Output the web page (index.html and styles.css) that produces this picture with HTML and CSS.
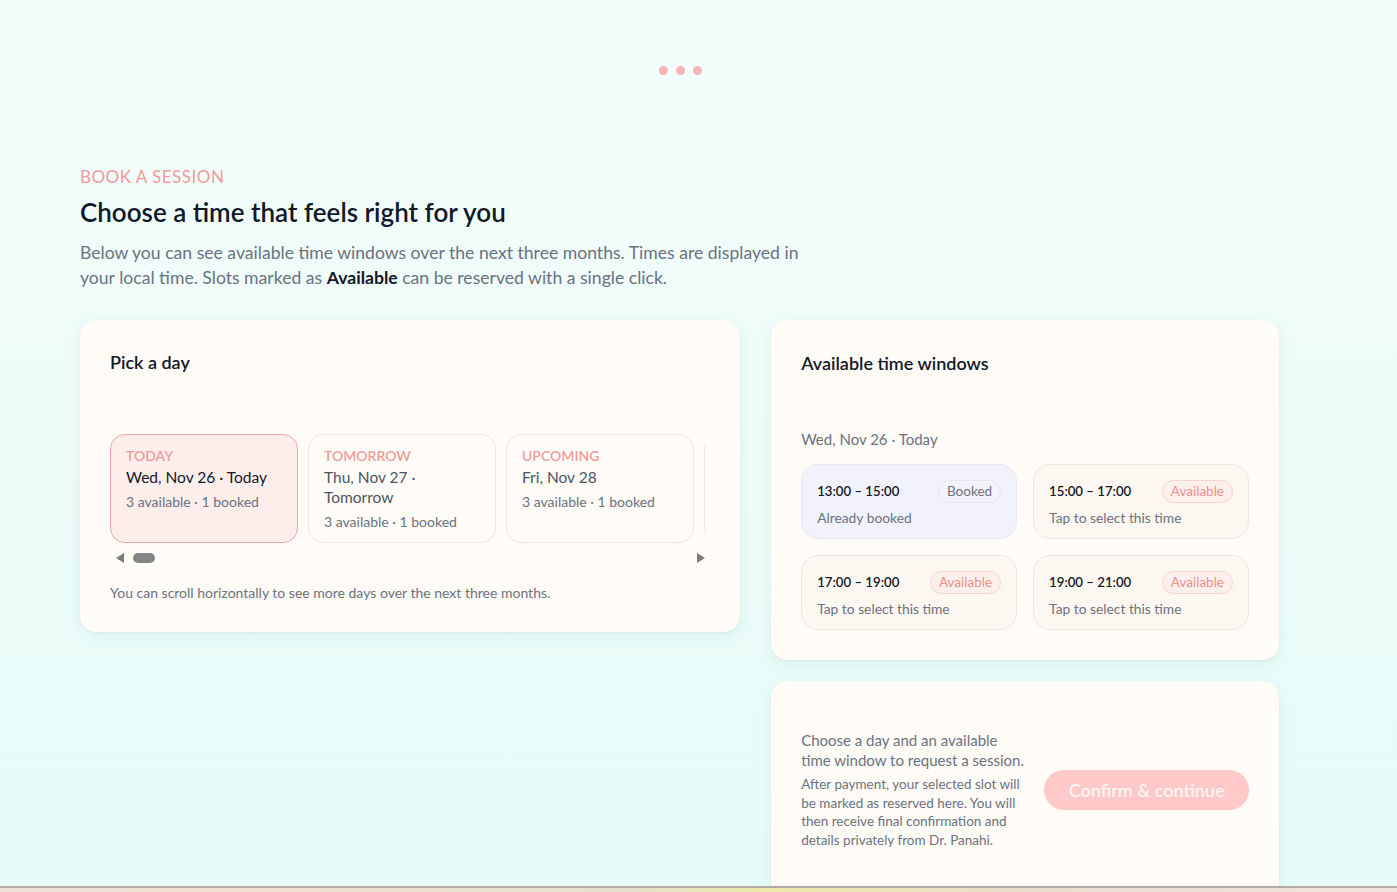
FILE: index.html
```html
<!DOCTYPE html>
<html lang="en">
<head>
<meta charset="utf-8">
<title>Book a session</title>
<link rel="stylesheet" href="styles.css">
</head>
<body>
<div class="loader"><span></span><span></span><span></span></div>
<main class="page">
  <header class="intro">
    <div class="eyebrow">BOOK A SESSION</div>
    <h1 class="title">Choose a time that feels right for you</h1>
    <p class="lead">Below you can see available time windows over the next three months. Times are displayed in your local time. Slots marked as <strong>Available</strong> can be reserved with a single click.</p>
  </header>
  <div class="layout">
    <section class="card days-card">
      <h2 class="card-title">Pick a day</h2>
      <div class="days-scroller">
        <div class="days">
          <div class="day active">
            <div class="day-tag">TODAY</div>
            <div class="day-date">Wed, Nov 26 · Today</div>
            <div class="day-meta">3 available · 1 booked</div>
          </div>
          <div class="day">
            <div class="day-tag">TOMORROW</div>
            <div class="day-date muted">Thu, Nov 27 · Tomorrow</div>
            <div class="day-meta">3 available · 1 booked</div>
          </div>
          <div class="day">
            <div class="day-tag">UPCOMING</div>
            <div class="day-date muted">Fri, Nov 28</div>
            <div class="day-meta">3 available · 1 booked</div>
          </div>
          <div class="day">
            <div class="day-tag">UPCOMING</div>
            <div class="day-date muted">Sat, Nov 29</div>
            <div class="day-meta">3 available · 1 booked</div>
          </div>
        </div>
        <div class="scrollbar">
          <span class="arrow left"></span>
          <span class="thumb"></span>
          <span class="track"></span>
          <span class="arrow right"></span>
        </div>
      </div>
      <p class="hint">You can scroll horizontally to see more days over the next three months.</p>
    </section>
    <div class="side">
      <section class="card slots-card">
        <h2 class="card-title">Available time windows</h2>
        <div class="slots-date">Wed, Nov 26 · Today</div>
        <div class="slots">
          <div class="slot booked">
            <div class="slot-top"><span class="slot-time">13:00 – 15:00</span><span class="badge badge-booked">Booked</span></div>
            <div class="slot-sub">Already booked</div>
          </div>
          <div class="slot">
            <div class="slot-top"><span class="slot-time">15:00 – 17:00</span><span class="badge">Available</span></div>
            <div class="slot-sub">Tap to select this time</div>
          </div>
          <div class="slot">
            <div class="slot-top"><span class="slot-time">17:00 – 19:00</span><span class="badge">Available</span></div>
            <div class="slot-sub">Tap to select this time</div>
          </div>
          <div class="slot">
            <div class="slot-top"><span class="slot-time">19:00 – 21:00</span><span class="badge">Available</span></div>
            <div class="slot-sub">Tap to select this time</div>
          </div>
        </div>
      </section>
      <section class="card confirm-card">
        <div class="confirm-text">
          <p class="confirm-main">Choose a day and an available time window to request a session.</p>
          <p class="confirm-note">After payment, your selected slot will be marked as reserved here. You will then receive final confirmation and details privately from Dr. Panahi.</p>
        </div>
        <button class="confirm-btn" type="button" disabled>Confirm &amp; continue</button>
      </section>
    </div>
  </div>
</main>
<div class="bottom-bar"></div>
</body>
</html>
```
FILE: styles.css
```css
* { box-sizing: border-box; }
html, body { margin: 0; padding: 0; }
body {
  font-family: Lato, "Noto Sans", sans-serif;
  background: linear-gradient(180deg, #f4fdfc 0%, #edfcf9 50%, #e7fbf8 100%);
  color: #111827;
  min-height: 892px;
}
.loader {
  display: flex;
  justify-content: center;
  gap: 8px;
  padding: 66px 37px 0 0;
  height: 167px;
}
.loader span {
  width: 9px; height: 9px; border-radius: 50%;
  background: #f8b3b3;
}
.page {
  padding: 0 118px 0 80px;
}
.eyebrow {
  color: #ef9b99;
  font-size: 17px;
  letter-spacing: 0.5px;
  line-height: 20px;
}
.title {
  margin: 10px 0 0 0;
  font-size: 26px;
  font-weight: 600;
  line-height: 30px;
  color: #111827;
}
.lead {
  margin: 13px 0 0 0;
  max-width: 730px;
  font-size: 17.6px;
  line-height: 25px;
  color: #6b7280;
}
.lead strong { color: #111827; font-weight: 700; }
.layout {
  margin-top: 30px;
  display: grid;
  grid-template-columns: minmax(0, 1.3fr) minmax(0, 1fr);
  gap: 31px;
  align-items: start;
}
.card {
  background: #fffbf6;
  border-radius: 16px;
  box-shadow: 0 4px 14px rgba(150, 200, 190, 0.18), 0 1px 2px rgba(150, 180, 170, 0.12);
}
.card-title {
  margin: 0;
  font-size: 18px;
  font-weight: 600;
  line-height: 24px;
  color: #111827;
}
.days-card { padding: 30px 30px 30px 30px; }
.days-scroller { margin-top: 60px; overflow: hidden; }
.days {
  display: flex;
  gap: 10px;
  width: 596px;
  overflow: hidden;
}
.day {
  flex: 0 0 188px;
  height: 109px;
  border: 1px solid #f5e5df;
  border-radius: 15px;
  background: #fffbf6;
  padding: 12px 15px;
}
.day.active {
  background: #fdeeec;
  border-color: #eda6a6;
}
.day-tag {
  font-size: 14px;
  color: #ef9b99;
  line-height: 18px;
  font-weight: 600;
}
.day-date {
  font-size: 15.5px;
  line-height: 20px;
  color: #111827;
  margin-top: 2px;
}
.day-date.muted { color: #4b5563; }
.day-meta {
  font-size: 14px;
  color: #6b7280;
  line-height: 18px;
  margin-top: 6px;
}
.scrollbar {
  display: flex;
  align-items: center;
  height: 16px;
  margin-top: 7px;
  width: 596px;
  padding: 0 1px 0 6px;
}
.arrow {
  width: 0; height: 0;
  border-top: 5px solid transparent;
  border-bottom: 5px solid transparent;
}
.arrow.left { border-right: 8px solid #7b7b7b; }
.arrow.right { border-left: 8px solid #7b7b7b; }
.thumb {
  width: 22px; height: 10px;
  border-radius: 5px;
  background: #858585;
  margin-left: 9px;
}
.track { flex: 1; }
.hint {
  margin: 18px 0 0 0;
  font-size: 14px;
  line-height: 18px;
  color: #6b7280;
}
.side { display: flex; flex-direction: column; gap: 21px; }
.slots-card { padding: 31px 30px 30px 30px; }
.slots-date {
  margin-top: 54px;
  font-size: 15px;
  line-height: 20px;
  color: #6b7280;
}
.slots {
  margin-top: 15px;
  display: grid;
  grid-template-columns: 1fr 1fr;
  gap: 16px;
}
.slot {
  height: 75px;
  border: 1px solid #f5e5df;
  background: #fdf7f1;
  border-radius: 17px;
  padding: 14px 15px;
}
.slot.booked { background: #f1f2fb; border-color: #e9e9f2; }
.slot-top {
  display: flex;
  justify-content: space-between;
  align-items: center;
  height: 24px;
}
.slot-time { font-size: 13.2px; font-weight: 600; color: #111827; }
.badge {
  font-size: 13.5px;
  line-height: 21px;
  padding: 0 8px;
  border-radius: 999px;
  border: 1px solid #f6d5d0;
  background: #fdf0ec;
  color: #ef8f8d;
}
.badge.badge-booked {
  border-color: #e6e6ef;
  background: #f3f3fb;
  color: #6b7280;
}
.slot-sub {
  margin-top: 6px;
  font-size: 13.8px;
  line-height: 18px;
  color: #6b7280;
}
.confirm-card {
  display: flex;
  gap: 15px;
  padding: 49px 30px 50px 30px;
  align-items: center;
}
.confirm-text { flex: 0 0 228px; }
.confirm-main {
  margin: 0;
  font-size: 15px;
  line-height: 20px;
  color: #6b7280;
}
.confirm-note {
  margin: 5px 0 0 0;
  font-size: 13.5px;
  line-height: 18.5px;
  color: #6b7280;
}
.confirm-btn {
  flex: 1;
  height: 40px;
  border: none;
  border-radius: 999px;
  background: #fec9c8;
  color: #fff5f3;
  font-family: inherit;
  font-size: 18px;
  font-weight: 600;
}
.bottom-bar {
  position: fixed;
  left: 0; right: 0; bottom: 0;
  height: 6px;
  border-top: 2px solid #b3aca6;
  background: linear-gradient(90deg, #eee1d8 0%, #f0e0d0 20%, #e4e0cc 45%, #ece9a8 55%, #eadccf 75%, #f2e3dc 100%);
}
```
